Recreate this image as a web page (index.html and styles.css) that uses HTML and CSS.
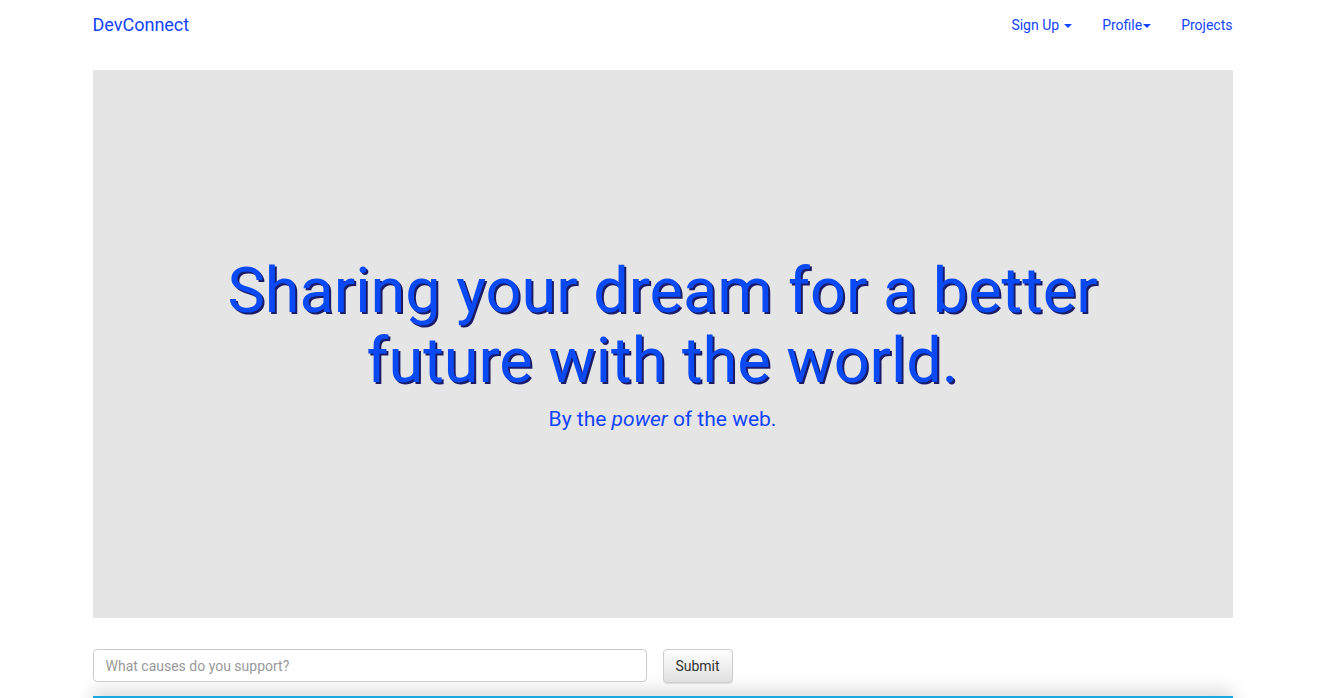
FILE: index.html
```html
<!DOCTYPE html>
<html>
<head>
<meta charset="utf-8">
<link rel="stylesheet" href="styles.css">
</head>
<body>
<nav class="navbar">
  <a class="brand" href="#">DevConnect</a>
  <ul class="nav-links">
    <li><a href="#">Sign Up <span class="caret spaced"></span></a></li>
    <li><a href="#">Profile<span class="caret"></span></a></li>
    <li><a href="#">Projects</a></li>
  </ul>
</nav>
<main class="container">
  <section class="jumbotron">
    <h1 class="headline">Sharing your dream for a better<br>future with the world.</h1>
    <p class="tagline">By the <em>power</em> of the web.</p>
  </section>
  <form class="cause-form">
    <input class="cause-input" type="text" placeholder="What causes do you support?">
    <button class="submit-btn" type="button">Submit</button>
  </form>
  <div class="bottom-panel"></div>
</main>
</body>
</html>
```
FILE: styles.css
```css
html, body {
  margin: 0;
  padding: 0;
  background: #fff;
  font-family: Roboto, "Liberation Sans", sans-serif;
  overflow: hidden;
}
.navbar {
  width: 1140px;
  margin: 0 auto;
  height: 50px;
  display: flex;
  align-items: center;
  justify-content: space-between;
}
.brand {
  color: #1144ff;
  font-size: 18px;
  text-decoration: none;
  margin-top: -1px;
}
.nav-links {
  list-style: none;
  margin: 0;
  padding: 0;
  display: flex;
  gap: 30px;
}
.nav-links a {
  color: #1144ff;
  font-size: 14px;
  text-decoration: none;
  display: flex;
  align-items: center;
}
.caret {
  display: inline-block;
  width: 0;
  height: 0;
  border-top: 4px solid #1144ff;
  border-left: 4px solid transparent;
  border-right: 4px solid transparent;
  margin-left: 1px;
  margin-top: 1px;
}
.caret.spaced { margin-left: 5px; }
.container {
  width: 1140px;
  margin: 20px auto 0;
}
.jumbotron {
  background: #e5e5e5;
  height: 548px;
  display: flex;
  flex-direction: column;
  align-items: center;
  justify-content: center;
  text-align: center;
}
.headline {
  margin: 0;
  font-family: Roboto, sans-serif;
  font-weight: 400;
  font-size: 63px;
  line-height: 70px;
  color: #0a4af5;
  text-shadow: 2px 2px 0 #1a1a66;
}
.tagline {
  margin: 10px 0 0;
  font-size: 21px;
  line-height: 26px;
  color: #1144ff;
}
.tagline em { font-style: italic; }
.cause-form {
  margin-top: 31px;
  display: flex;
  gap: 16px;
  align-items: flex-start;
}
.cause-input {
  width: 554px;
  height: 33px;
  box-sizing: border-box;
  border: 1px solid #ccc;
  border-radius: 4px;
  padding: 0 12px;
  font-family: Roboto, sans-serif;
  font-size: 14px;
  color: #555;
}
.cause-input::placeholder { color: #999; }
.submit-btn {
  height: 34px;
  width: 70px;
  border: 1px solid #ccc;
  border-radius: 4px;
  background: linear-gradient(#fff, #e0e0e0);
  font-family: Roboto, sans-serif;
  font-size: 14px;
  color: #333;
  box-shadow: 0 1px 1px rgba(0,0,0,0.1);
}
.bottom-panel {
  margin-top: 13px;
  height: 20px;
  border-top: 2px solid #1aa8e0;
  box-shadow: 0 -6px 18px rgba(0,0,0,0.15);
  background: #fff;
}
```
